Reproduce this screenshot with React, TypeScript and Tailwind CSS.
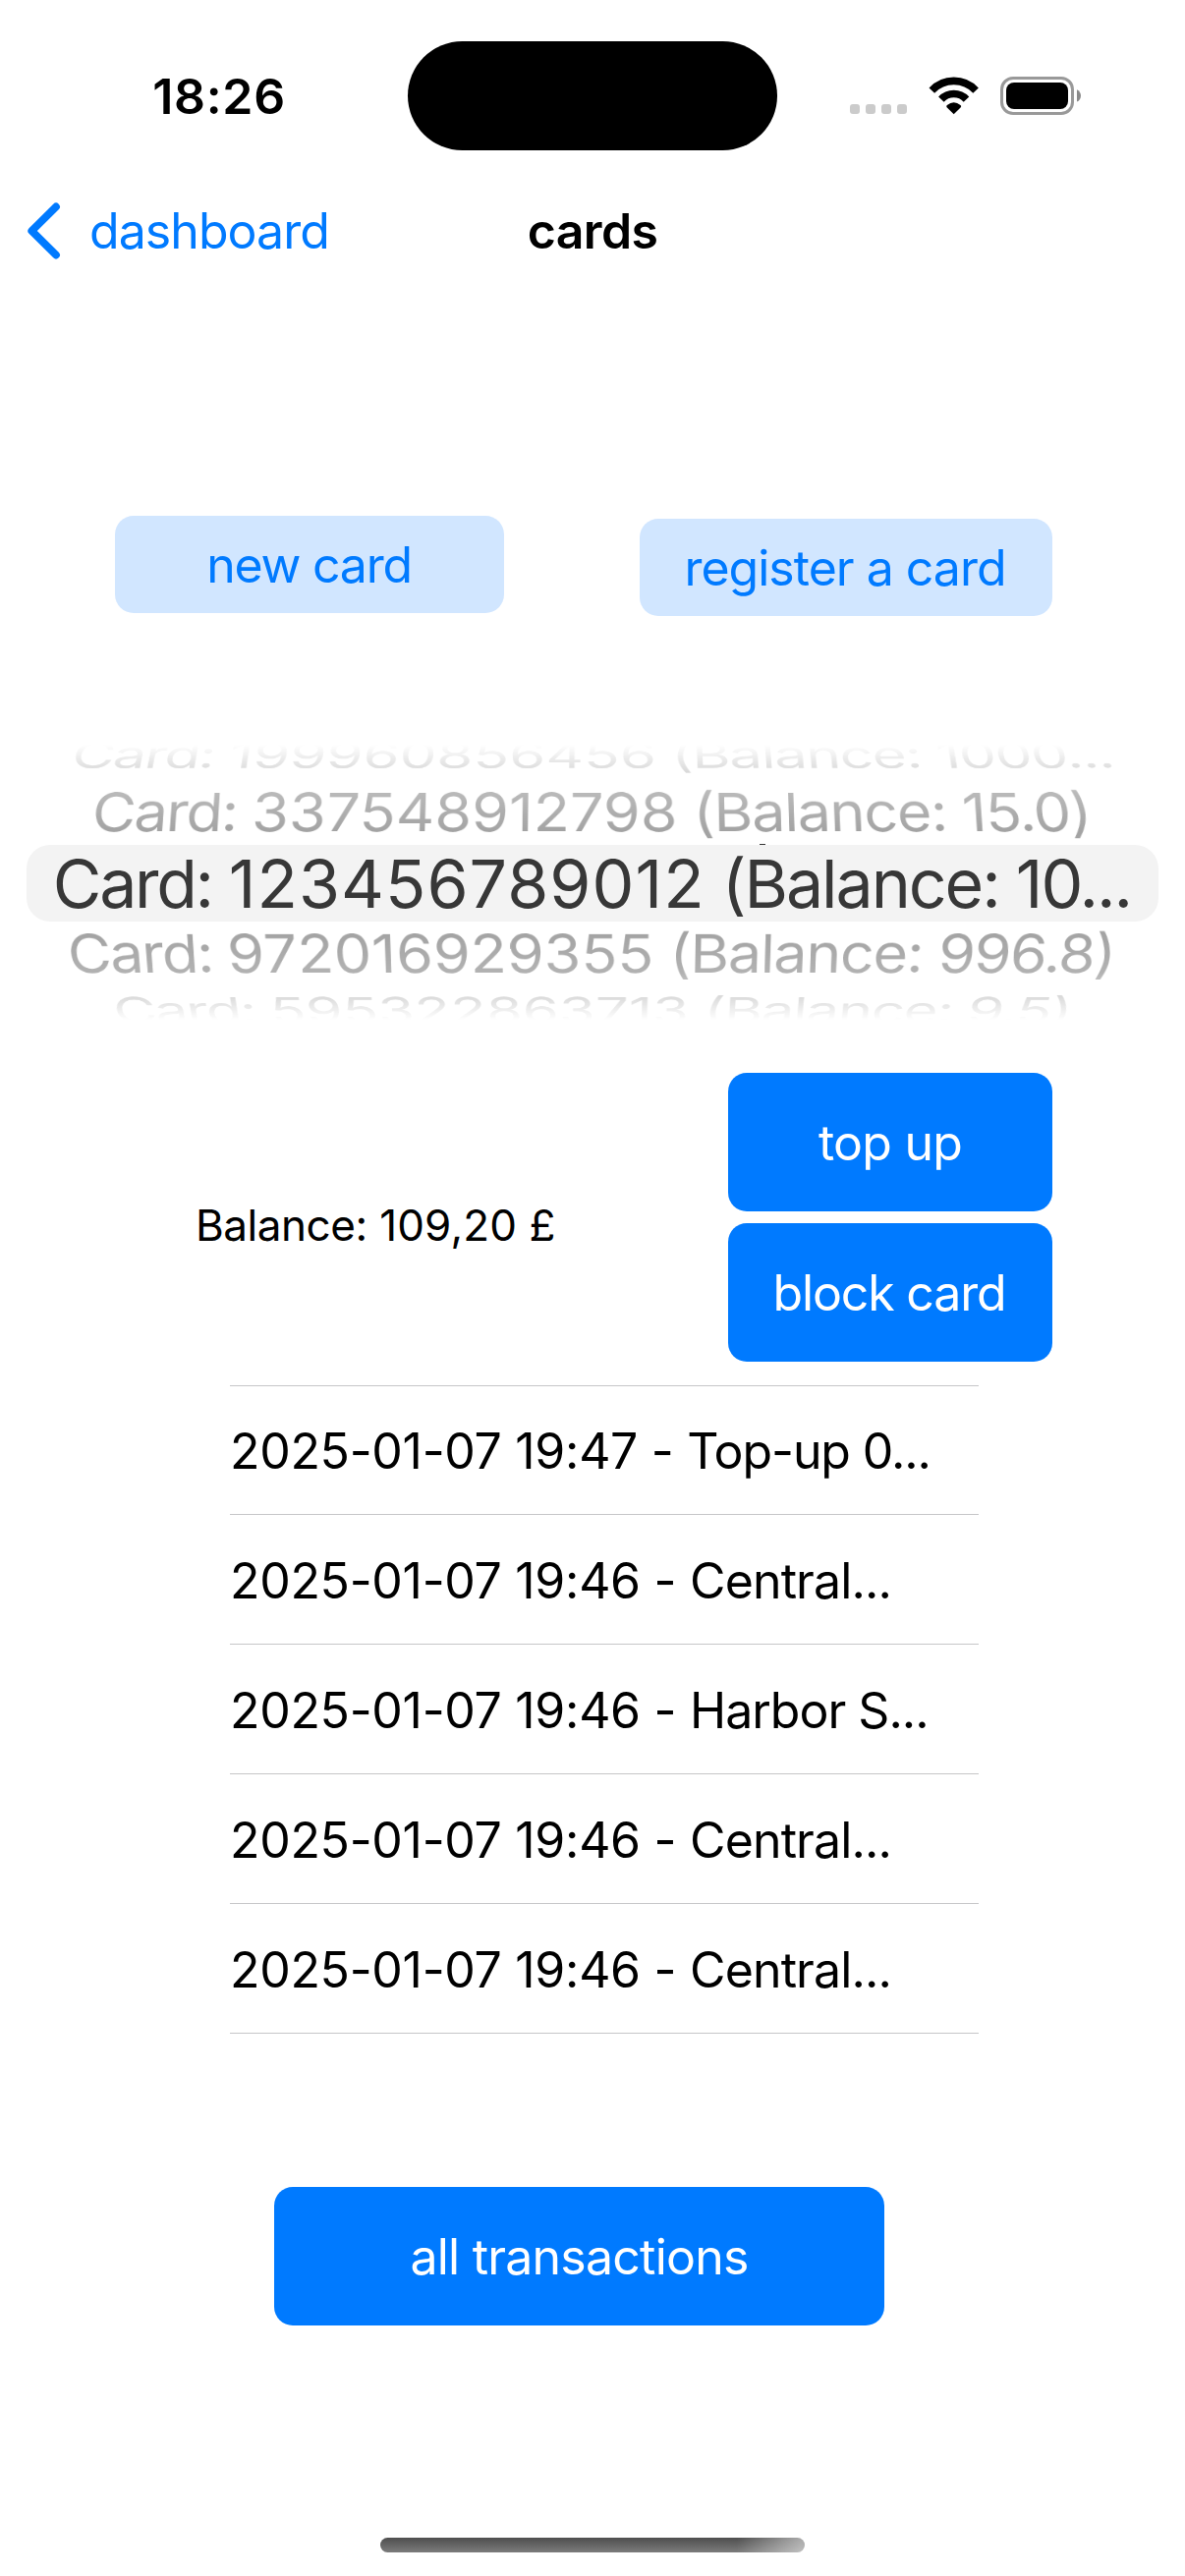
import type { ReactNode } from "react";

const transactions = [
  { id: 1, time: "2025-01-07 19:47 -", detail: "Top-up 0...", tracking: "tracking-[-1.1px]" },
  { id: 2, time: "2025-01-07 19:46 -", detail: "Central...", tracking: "tracking-[-0.87px]" },
  { id: 3, time: "2025-01-07 19:46 -", detail: "Harbor S...", tracking: "tracking-[-1px]" },
  { id: 4, time: "2025-01-07 19:46 -", detail: "Central...", tracking: "tracking-[-0.87px]" },
  { id: 5, time: "2025-01-07 19:46 -", detail: "Central...", tracking: "tracking-[-0.87px]" },
];

function WifiIcon() {
  return (
    <svg className="ml-[22px] h-[39px] w-[52px]" viewBox="0 0 52 39" fill="none">
      <path d="M3.3 14.1A30.6 30.6 0 0 1 48.1 14.1" stroke="#000" strokeWidth="7.6" />
      <path d="M12.9 23.1A17.5 17.5 0 0 1 38.5 23.1" stroke="#000" strokeWidth="7.6" />
      <path d="M18.6 31.2Q17.6 30 18.9 29Q25.7 23.6 32.5 29Q33.8 30 32.8 31.2L25.7 38.3Z" fill="#000" />
    </svg>
  );
}

function BatteryIcon() {
  return (
    <svg className="ml-[21px] h-[39px] w-[83px]" viewBox="0 0 83 39" fill="none">
      <rect x="1.5" y="1.5" width="72" height="36" rx="11.5" stroke="#999" strokeWidth="3" />
      <rect x="6" y="6" width="63" height="27" rx="8" fill="#000" />
      <path d="M78 13.2C80.4 14.2 82 16.6 82 19.4S80.4 24.6 78 25.6Z" fill="#8a8a8a" />
    </svg>
  );
}

function StatusBar() {
  return (
    <div className="flex h-[153px] items-center pt-[41px]">
      <div className="w-[415px] pt-[2px] pl-[31px] text-center font-semibold tracking-[0.67px]">18:26</div>
      <div className="h-[111px] w-[376px] rounded-full bg-black" />
      <div className="flex flex-1 items-center pt-px pl-[74px]">
        <div className="flex gap-[6px] pt-[27px]">
          <i className="size-[10px] rounded-[3px] bg-[#cbcbcb]" />
          <i className="size-[10px] rounded-[3px] bg-[#cbcbcb]" />
          <i className="size-[10px] rounded-[3px] bg-[#cbcbcb]" />
          <i className="size-[10px] rounded-[3px] bg-[#cbcbcb]" />
        </div>
        <WifiIcon />
        <BatteryIcon />
      </div>
    </div>
  );
}

function NavBar() {
  return (
    <nav className="mt-4 grid h-[132px] grid-cols-[1fr_auto_1fr] items-center">
      <button className="flex items-center pl-[27px] tracking-[-0.94px] text-[#007aff]">
        <svg className="h-[60px] w-[36px]" viewBox="0 0 36 60" fill="none">
          <path d="M30 5.5L5.3 30L30 54.5" stroke="#007aff" strokeWidth="7.8" strokeLinecap="round" strokeLinejoin="round" />
        </svg>
        <span className="ml-[28px]">dashboard</span>
      </button>
      <h1 className="font-semibold tracking-[-0.6px]">cards</h1>
      <span />
    </nav>
  );
}

function FilledButton({ className, children }: { className: string; children: ReactNode }) {
  return (
    <button
      className={`flex h-[141px] items-center justify-center rounded-[19px] bg-[#007aff] pt-px text-white ${className}`}
    >
      {children}
    </button>
  );
}

function CardLabel({ number, balance }: { number: string; balance: string }) {
  return (
    <span className="whitespace-pre">
      <span className="tracking-[-1.9px]">Card: </span>
      <span className="tracking-[0.05px]">{number}</span>
      <span className="tracking-[-1.4px]"> (Balance: {balance}</span>
    </span>
  );
}

/* Wheel picker: rows tilt and fade the further they sit from the selection. */
function CardPicker() {
  return (
    <div className="relative mt-[115px]">
      <div className="h-[314px] overflow-hidden text-[68px] whitespace-nowrap text-black [mask-image:linear-gradient(to_bottom,transparent_16px,rgba(0,0,0,.13)_40px,rgba(0,0,0,.27)_64px,rgba(0,0,0,.36)_104px,rgba(0,0,0,.36)_118px,#000_118px,#000_196px,rgba(0,0,0,.36)_196px,rgba(0,0,0,.36)_208px,rgba(0,0,0,.3)_248px,rgba(0,0,0,.15)_272px,transparent_296px)]">
        <div className="flex h-[52px] items-center justify-center [transform:perspective(3000px)_rotateX(52deg)_scale(.881)]">
          <CardLabel number="199960856456" balance="1000..." />
        </div>
        <div className="flex h-[66px] items-center justify-center [transform:translate(-1px,-1px)_perspective(3000px)_rotateX(27deg)_scale(.896)]">
          <CardLabel number="337548912798" balance="15.0)" />
        </div>
        <div className="mx-[27px] flex h-[78px] items-center justify-center rounded-[24px] bg-[#f3f3f3] pr-px whitespace-pre text-[#373737]">
          <span className="tracking-[-2.3px]">Card: </span>
          <span className="tracking-[1.05px]">123456789012</span>
          <span className="tracking-[-2.05px]"> (Balance: 10...</span>
        </div>
        <div className="flex h-[66px] items-center justify-center [transform:translate(-1px,-1px)_perspective(3000px)_rotateX(-27deg)_scale(.896)]">
          <CardLabel number="972016929355" balance="996.8)" />
        </div>
        <div className="flex h-[48px] items-center justify-center [transform:perspective(3000px)_rotateX(-52deg)_scale(.879)]">
          <CardLabel number="595322863713" balance="9.5)" />
        </div>
      </div>
      <i className="absolute top-[117px] left-[773px] h-px w-[6px] bg-[#373737]" />
    </div>
  );
}

export default function App() {
  return (
    <main className="flex h-[2622px] w-[1206px] flex-col overflow-hidden bg-white font-['Inter',sans-serif] text-[50px] leading-none text-black">
      <StatusBar />
      <NavBar />

      <section className="mt-[224px] flex items-start justify-between pr-[135px] pl-[117px] text-[#007aff]">
        <button className="flex h-[99px] w-[396px] items-center justify-center rounded-[19px] bg-[#d1e6ff] pt-px pr-px tracking-[-1.25px]">
          new card
        </button>
        <button className="mt-[3px] flex h-[99px] w-[420px] items-center justify-center rounded-[19px] bg-[#d1e6ff] pt-px pr-[2px] tracking-[-1px]">
          register a card
        </button>
      </section>

      <CardPicker />

      <section className="mt-[36px] flex items-center justify-between pr-[135px] pl-[199px]">
        <p className="pt-[16px] text-[44px]">
          <span className="tracking-[-0.45px]">Balance:</span>
          <span className="tracking-[0.12px]"> 109,20 £</span>
        </p>
        <div className="flex w-[330px] flex-col gap-3">
          <FilledButton className="tracking-[-0.75px]">top up</FilledButton>
          <FilledButton className="pr-[2px] tracking-[-1.14px]">block card</FilledButton>
        </div>
      </section>

      <ul className="mt-[24px] ml-[234px] w-[762px]">
        {transactions.map((t) => (
          <li
            key={t.id}
            className="flex h-[132px] items-center border-b border-[#c6c6c8] pt-[2px] whitespace-pre first:border-t"
          >
            <span className="tracking-[-0.31px]">{t.time} </span>
            <span className={t.tracking}>{t.detail}</span>
          </li>
        ))}
      </ul>

      <FilledButton className="mt-[156px] ml-[279px] w-[621px] tracking-[-0.77px]">all transactions</FilledButton>

      <div className="mx-auto mt-[216px] h-[15px] w-[432px] rounded-full bg-[linear-gradient(to_right,transparent_84%,rgba(255,255,255,.5)_99%),linear-gradient(to_bottom,#4e4e4e,#7c7c7c)]" />
    </main>
  );
}
